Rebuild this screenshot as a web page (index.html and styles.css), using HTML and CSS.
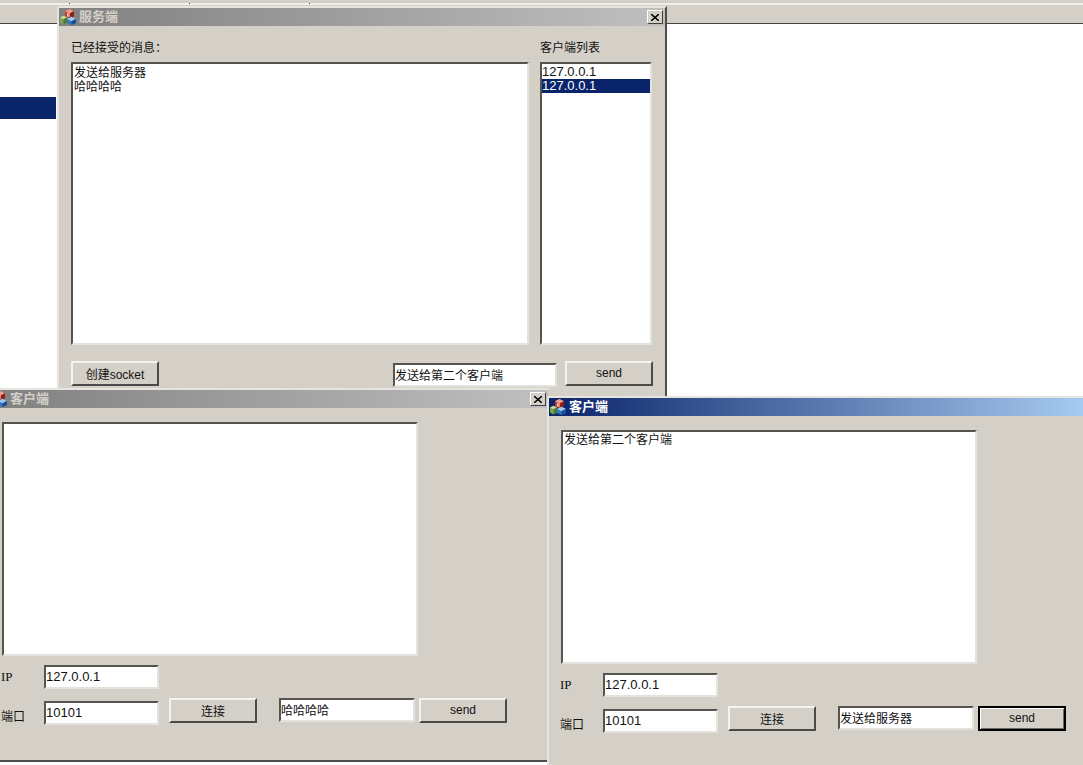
FILE: index.html
```html
<!DOCTYPE html>
<html lang="zh-CN">
<head>
  <meta charset="UTF-8" />
  <title>socket</title>
  <link rel="stylesheet" href="styles.css">
</head>
<body>
  <svg class="icon-defs" width="0" height="0">
    <symbol id="app-icon" viewBox="0 0 16 16">
      <path d="M5 2.200 9.500 0 14 2.200v5L9.500 9.500 5 7.200z" fill="#c9362c"/>
      <path d="M5 2.200 9.500 4.400 14 2.200 9.500 0z" fill="#e9a08f"/>
      <path d="M9.500 4.400v5L14 7.200v-5z" fill="#8e1f1a"/>
      <path d="M7 4.500h3v1H8v1h2v1H7z" fill="#f5e6c8"/>
      <path d="M0 8.500 3.500 6.800 7 8.500v5L3.500 15.500 0 13.500z" fill="#7fa650"/>
      <path d="M0 8.500 3.500 10.300 7 8.500 3.500 6.800z" fill="#c4d99d"/>
      <path d="M3.500 10.300v5.200L7 13.500v-5z" fill="#4f7a30"/>
      <path d="M7 10 11.500 7.800 16 10v4l-4.500 2L7 14z" fill="#2f78c4"/>
      <path d="M7 10l4.500 2.200L16 10l-4.500-2.200z" fill="#9cc8ee"/>
      <path d="M11.500 12.200V16L16 14v-4z" fill="#1b4c8e"/>
    </symbol>
  </svg>

  <div class="toolbar">
    <div class="ticks"><i></i><i></i><i></i></div>
  </div>
  <div class="side-list">
    <div class="side-row"></div>
  </div>

  <!-- server -->
  <div class="window server">
    <div class="titlebar">
      <svg class="app-icon"><use href="#app-icon"/></svg>
      <span class="title">服务端</span>
      <span class="close"><svg width="8" height="7" viewBox="0 0 8 7"><path d="M0 0l8 7M8 0L0 7" stroke="#000" stroke-width="1.500"/></svg></span>
    </div>
    <div class="server-body">
      <div class="server-grid">
        <label>已经接受的消息：</label>
        <label>客户端列表</label>
        <div class="field log">发送给服务器<br>哈哈哈哈</div>
        <div class="field list">
          <div class="list-item">127.0.0.1</div>
          <div class="list-item selected">127.0.0.1</div>
        </div>
      </div>
      <div class="server-footer">
        <button class="btn">创建socket</button>
        <input class="field msg-wide" type="text" value="发送给第二个客户端">
        <button class="btn">send</button>
      </div>
    </div>
  </div>

  <!-- client, behind -->
  <div class="window client client-back">
    <div class="titlebar">
      <svg class="app-icon"><use href="#app-icon"/></svg>
      <span class="title">客户端</span>
      <span class="close"><svg width="8" height="7" viewBox="0 0 8 7"><path d="M0 0l8 7M8 0L0 7" stroke="#000" stroke-width="1.500"/></svg></span>
    </div>
    <div class="client-body">
      <div class="field client-log"></div>
      <div class="row">
        <span class="row-label ip-label">IP</span>
        <input class="field addr" type="text" value="127.0.0.1">
      </div>
      <div class="row">
        <span class="row-label port-label">端口</span>
        <input class="field addr port" type="text" value="10101">
        <button class="btn connect">连接</button>
        <input class="field msg" type="text" value="哈哈哈哈">
        <button class="btn">send</button>
      </div>
    </div>
  </div>

  <!-- client, active -->
  <div class="window client client-front">
    <div class="titlebar active">
      <svg class="app-icon"><use href="#app-icon"/></svg>
      <span class="title">客户端</span>
    </div>
    <div class="client-body">
      <div class="field client-log">发送给第二个客户端</div>
      <div class="row">
        <span class="row-label ip-label">IP</span>
        <input class="field addr" type="text" value="127.0.0.1">
      </div>
      <div class="row">
        <span class="row-label port-label">端口</span>
        <input class="field addr port" type="text" value="10101">
        <button class="btn connect">连接</button>
        <input class="field msg" type="text" value="发送给服务器">
        <button class="btn default">send</button>
      </div>
    </div>
  </div>
</body>
</html>
```

FILE: styles.css
```css
* {
  box-sizing: border-box;
}

:root {
  --face: #d4d0c8;
  --shadow: #4a4a46;
  --hilite: #f4f3ef;
  --select: #0a246a;
}

html, body {
  height: 100%;
}

body {
  margin: 0;
  background: #fff;
  overflow: hidden;
  position: relative;
  font-family: "Liberation Sans", "Noto Sans CJK SC", sans-serif;
  font-size: 12px;
  color: #111;
}

.icon-defs {
  position: absolute;
}

/* app behind the windows */
.toolbar {
  height: 24px;
  padding-top: 3px;
  background: var(--face);
  border-bottom: 1px solid #45443f;
}

.ticks {
  display: flex;
  gap: 119px;
  height: 2px;
  padding-left: 69px;
  background: #f1efe9;
}

.ticks i {
  width: 1px;
  height: 1px;
  background: #55534d;
}

.side-list {
  width: 56px;
  padding-top: 73px;
}

.side-row {
  height: 22px;
  background: var(--select);
}

/* windows */
.window {
  position: absolute;
  background: var(--face);
  border: 2px solid var(--face);
  border-top-color: #e6e4de;
  border-left-color: #e6e4de;
}

.server {
  left: 57px;
  top: 6px;
  width: 610px;
  height: 392px;
  border-right-color: #4d4c47;
}

.client-back {
  left: -12px;
  top: 388px;
  width: 562px;
  height: 374px;
  border-bottom-color: #4d4c47;
}

.client-front {
  left: 547px;
  top: 396px;
  width: 560px;
  height: 400px;
}

.titlebar {
  display: flex;
  align-items: center;
  height: 18px;
  padding-left: 1px;
  background: linear-gradient(to right, #808080, #c0c0c0);
  color: var(--face);
}

.titlebar.active {
  background: linear-gradient(to right, #0a246a, #a6caf0 96%);
  color: #fff;
}

.app-icon {
  width: 16px;
  height: 16px;
  flex: none;
}

.title {
  margin-left: 3px;
  font-size: 13px;
  font-weight: bold;
  line-height: 18px;
}

.close {
  display: flex;
  align-items: center;
  justify-content: center;
  width: 16px;
  height: 14px;
  margin-left: auto;
  margin-right: 2px;
  background: var(--face);
  border: 1px solid;
  border-color: #fff #404040 #404040 #fff;
}

/* sunken controls */
.field {
  background: #fff;
  border: 2px solid;
  border-color: #55544f #e4e2dc #e4e2dc #55544f;
  border-radius: 0;
  color: #111;
  font: inherit;
  line-height: 14px;
  outline: none;
}

input.field {
  padding: 0 0 2px;
}

.btn {
  height: 25px;
  width: 88px;
  padding: 0 0 1px;
  background: var(--face);
  border: 2px solid;
  border-color: var(--hilite) var(--shadow) var(--shadow) var(--hilite);
  border-radius: 0;
  color: #111;
  font: inherit;
}

.btn.default {
  border-color: #000;
  box-shadow: inset 1px 1px 0 #fff, inset -1px -1px 0 #6b6a65;
}

/* server window */
.server-body {
  padding: 14px 12px 0;
}

.server-grid {
  display: grid;
  grid-template-columns: 458px 112px;
  grid-template-rows: 17px 283px;
  column-gap: 11px;
  row-gap: 5px;
}

.server-grid label {
  line-height: 17px;
}

.log {
  padding: 2px 1px 0;
}

.list-item {
  height: 14px;
  font-size: 13px;
  line-height: 14px;
}

.list-item.selected {
  background: var(--select);
  color: #fff;
}

.list {
  padding-top: 1px;
}

.server-footer {
  display: flex;
  gap: 8px;
  margin-top: 16px;
}

.msg-wide {
  width: 164px;
  height: 24px;
  margin-top: 2px;
  margin-left: auto;
}

/* client windows */
.client-body {
  display: flex;
  flex-direction: column;
  gap: 9px;
  padding: 14px 11px 0;
}

.client-log {
  width: 416px;
  height: 234px;
  margin-left: 1px;
  padding: 1px;
}

.row {
  display: flex;
}

.row-label {
  width: 43px;
  flex: none;
}

.ip-label {
  font-family: "Liberation Serif", serif;
  font-size: 13px;
  line-height: 24px;
}

.port-label {
  padding-top: 12px;
  line-height: 14px;
}

.addr {
  width: 115px;
  height: 24px;
  font-size: 13px;
}

.port {
  margin-top: 3px;
}

.connect {
  margin-left: 10px;
  margin-right: 22px;
}

.msg {
  width: 136px;
  height: 24px;
  margin-right: 4px;
}
```
